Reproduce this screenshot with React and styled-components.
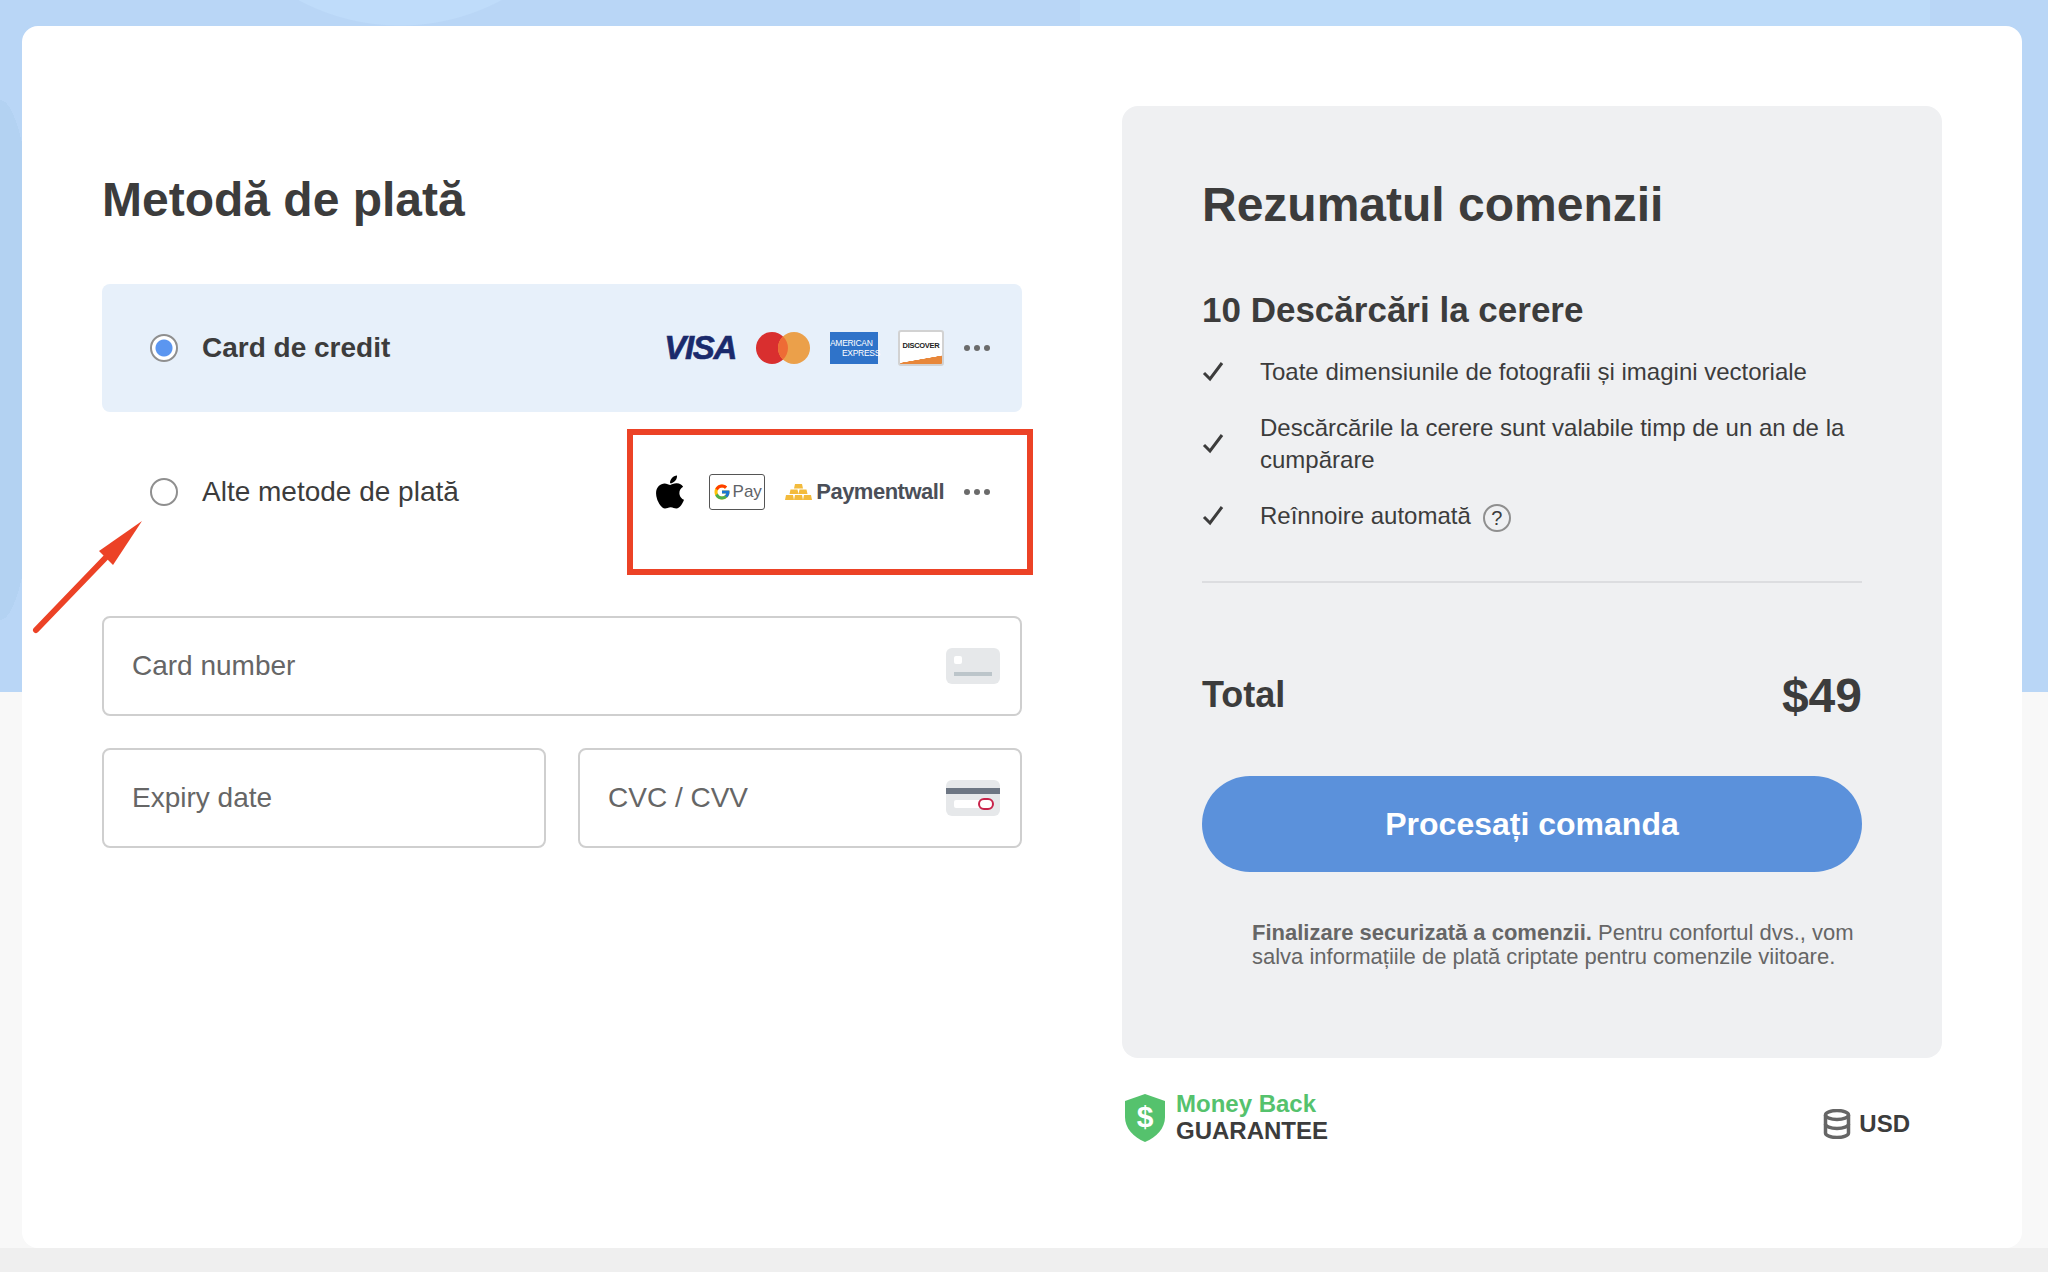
import React from 'react';
import styled, { createGlobalStyle } from 'styled-components';
import { FaApple } from 'react-icons/fa';
import { FcGoogle } from 'react-icons/fc';

const GlobalStyle = createGlobalStyle`
  html, body {
    margin: 0;
    padding: 0;
  }
  body {
    font-family: "Liberation Sans", Arial, sans-serif;
    color: #3c3c3c;
  }
  * {
    box-sizing: border-box;
  }
`;

const Page = styled.div`
  width: 2048px;
  height: 1272px;
  overflow: hidden;
  padding: 26px 26px 0 22px;
  background:
    radial-gradient(circle at 400px -190px, #bfdcfa 0 215px, transparent 216px),
    radial-gradient(ellipse 40px 260px at 0 360px, #b3d2f2 0 100%, transparent 100%),
    linear-gradient(90deg, transparent 0 1080px, #bddbf9 1080px 1930px, transparent 1930px) 0 0 / 100% 26px no-repeat,
    linear-gradient(180deg, #b9d6f6 0 692px, #f8f8f8 692px 1248px, #efefef 1248px);
`;

const Card = styled.main`
  position: relative;
  width: 2000px;
  height: 1222px;
  padding: 80px;
  display: flex;
  gap: 100px;
  background: #fff;
  border-radius: 16px;
`;

const PaymentColumn = styled.section`
  width: 920px;
  flex: none;
`;

const Title = styled.h1`
  margin: ${(p) => p.$margin};
  font-size: 48px;
  line-height: 56px;
  font-weight: 700;
  color: #3c3c3c;
`;

const MethodRow = styled.div`
  height: 128px;
  margin-top: ${(p) => p.$top}px;
  padding: 0 32px 0 48px;
  display: flex;
  align-items: center;
  border-radius: 8px;
  background: ${(p) => (p.$active ? '#e7f0fa' : 'transparent')};
`;

const Radio = styled.span`
  width: 28px;
  height: 28px;
  flex: none;
  margin-right: 24px;
  border-radius: 50%;
  border: 2px solid #8f8f8f;
  background: ${(p) => (p.$checked ? 'radial-gradient(circle, #5b96f0 0 8px, #fff 9px)' : '#fff')};
`;

const MethodLabel = styled.span`
  font-size: 28px;
  font-weight: ${(p) => (p.$bold ? 700 : 400)};
  color: #3c3c3c;
`;

const Logos = styled.div`
  margin-left: auto;
  display: flex;
  align-items: center;
  gap: 20px;
`;

const Visa = styled.span`
  font-size: 33px;
  line-height: 36px;
  font-weight: 700;
  font-style: italic;
  letter-spacing: -1.3px;
  -webkit-text-stroke: 0.6px #1a2a6c;
  color: #1a2a6c;
`;

const Amex = styled.span`
  width: 48px;
  height: 32px;
  display: flex;
  flex-direction: column;
  justify-content: center;
  background: #2f73c9;
  color: #fff;
  font-size: 8.5px;
  line-height: 10px;
  white-space: nowrap;
  letter-spacing: -0.3px;
  span:last-child {
    padding-left: 12px;
  }
`;

const Discover = styled.span`
  width: 46px;
  height: 36px;
  display: flex;
  align-items: center;
  justify-content: center;
  border: 2px solid #d2d2d2;
  border-radius: 3px;
  background: linear-gradient(170deg, #fff 0 78%, #e8873a 79%);
  padding-bottom: 5px;
  font-size: 7.5px;
  font-weight: 700;
  letter-spacing: -0.3px;
  color: #222;
`;

const Dots = styled.span`
  display: flex;
  gap: 4px;
  i {
    width: 6px;
    height: 6px;
    border-radius: 50%;
    background: #6b6b6b;
  }
`;

const GPay = styled.span`
  width: 56px;
  height: 36px;
  display: flex;
  align-items: center;
  justify-content: center;
  gap: 2px;
  border: 1px solid #555;
  border-radius: 3px;
  background: #fff;
  font-size: 17px;
  color: #5f6368;
`;

const PaymentWall = styled.span`
  display: flex;
  align-items: center;
  gap: 4px;
  font-size: 22px;
  font-weight: 700;
  letter-spacing: -0.5px;
  color: #4b4f58;
`;

const RedBox = styled.div`
  position: absolute;
  left: 605px;
  top: 403px;
  width: 406px;
  height: 146px;
  border: 6px solid #ec4226;
  pointer-events: none;
`;

const ArrowMark = styled.svg`
  position: absolute;
  left: 8px;
  top: 489px;
`;

const FieldRow = styled.div`
  display: flex;
  gap: 32px;
  margin-top: ${(p) => p.$top}px;
`;

const Field = styled.div`
  height: 100px;
  flex: 1;
  padding: 0 20px 0 28px;
  display: flex;
  align-items: center;
  justify-content: space-between;
  border: 2px solid #cfcfcf;
  border-radius: 8px;
  font-size: 28px;
  color: #666;
`;

const SummaryColumn = styled.aside`
  width: 820px;
  flex: none;
`;

const SummaryPanel = styled.div`
  height: 952px;
  padding: 0 80px;
  background: #eff0f2;
  border-radius: 16px;
  overflow: hidden;
`;

const PlanName = styled.h2`
  margin: 55px 0 0;
  font-size: 35px;
  line-height: 44px;
  font-weight: 700;
  color: #3c3c3c;
`;

const Features = styled.ul`
  list-style: none;
  margin: 23px 0 0;
  padding: 0 0 49px;
  border-bottom: 2px solid #dcdde0;
`;

const Feature = styled.li`
  display: flex;
  align-items: center;
  min-height: 32px;
  margin-top: 24px;
  gap: 34px;
  font-size: 24px;
  line-height: 32px;
  color: #3c3c3c;
`;

const CheckIcon = styled.svg`
  width: 24px;
  height: 24px;
  flex: none;
`;

const Help = styled.span`
  width: 28px;
  height: 28px;
  margin-left: 12px;
  display: inline-flex;
  align-items: center;
  justify-content: center;
  vertical-align: middle;
  border: 2px solid #8f8f8f;
  border-radius: 50%;
  font-size: 20px;
  line-height: 1;
`;

const TotalRow = styled.div`
  margin-top: 84px;
  height: 56px;
  display: flex;
  align-items: center;
  justify-content: space-between;
  font-weight: 700;
  color: #3c3c3c;
`;

const TotalLabel = styled.span`
  font-size: 36px;
`;

const TotalPrice = styled.span`
  font-size: 48px;
`;

const PayButton = styled.button`
  display: block;
  width: 660px;
  height: 96px;
  margin-top: 53px;
  border: 0;
  border-radius: 48px;
  background: #5b91db;
  color: #fff;
  font-family: inherit;
  font-size: 32px;
  font-weight: 700;
`;

const SecureNote = styled.p`
  margin: 49px 0 0;
  padding: 0 0 0 50px;
  font-size: 22px;
  line-height: 24px;
  color: #666;
  b {
    font-weight: 700;
  }
`;

const BelowPanel = styled.div`
  margin-top: 34px;
  padding: 0 32px 0 2px;
  display: flex;
  align-items: center;
  justify-content: space-between;
`;

const Guarantee = styled.div`
  display: flex;
  align-items: center;
  gap: 10px;
`;

const GuaranteeText = styled.div`
  margin-top: -2px;
  font-size: 24px;
  line-height: 27px;
  font-weight: 700;
  color: #3c3c3c;
  span {
    display: block;
    color: #55c26d;
  }
`;

const Currency = styled.div`
  display: flex;
  align-items: center;
  gap: 8px;
  margin-top: 12px;
  font-size: 24px;
  font-weight: 700;
  color: #3c3c3c;
`;

const MoreDots = () => (
  <Dots>
    <i />
    <i />
    <i />
  </Dots>
);

const Mastercard = () => (
  <svg width="54" height="32" viewBox="0 0 54 32">
    <circle cx="16" cy="16" r="16" fill="#d92f2f" />
    <circle cx="38" cy="16" r="16" fill="#eba04a" />
    <path d="M27 4.4a16 16 0 0 1 0 23.2 16 16 0 0 1 0-23.2z" fill="#ee6b35" />
  </svg>
);

const GoldBars = () => (
  <svg width="27" height="16" viewBox="0 0 27 16">
    <path
      fill="#f3bb3c"
      d="M10 0h7l1 4.5H9zM5.500 5.500h7l1 4.500h-9zM14.500 5.500h7l1 4.500h-9zM1 11h7l1 5H0zM10 11h7l1 5H9zM19 11h7l1 5h-9z"
    />
  </svg>
);

const CardFront = () => (
  <svg width="54" height="36" viewBox="0 0 54 36">
    <rect width="54" height="36" rx="6" fill="#e6e8ea" />
    <rect x="8" y="8" width="8" height="8" rx="2" fill="#fff" />
    <rect x="8" y="24" width="38" height="4" fill="#bcc5ca" />
  </svg>
);

const CardBack = () => (
  <svg width="54" height="36" viewBox="0 0 54 36">
    <rect width="54" height="36" rx="6" fill="#e6e8ea" />
    <rect y="8" width="54" height="6" fill="#6d7683" />
    <rect x="8" y="20" width="36" height="8" rx="2" fill="#fff" />
    <rect x="33" y="19" width="14" height="10" rx="5" fill="#fff" stroke="#c8234a" strokeWidth="2" />
  </svg>
);

const Check = () => (
  <CheckIcon viewBox="0 0 24 24">
    <path d="M2 13l6 6L20 3" fill="none" stroke="#3c3c3c" strokeWidth="3" />
  </CheckIcon>
);

const Shield = () => (
  <svg width="42" height="48" viewBox="0 0 42 48">
    <path d="M21 0l20 7v16c0 11-8 20-20 25C9 43 1 34 1 23V7z" fill="#55c26d" />
    <text x="21" y="33" textAnchor="middle" fontFamily="Liberation Sans" fontWeight="700" fontSize="30" fill="#fff">
      $
    </text>
  </svg>
);

const Coins = () => (
  <svg width="28" height="30" viewBox="0 0 28 30" fill="none" stroke="#666" strokeWidth="3.500">
    <ellipse cx="14" cy="6" rx="11.500" ry="4.500" />
    <path d="M2.500 6v18c0 2.500 5 4.500 11.500 4.500S25.500 26.500 25.500 24V6" />
    <path d="M2.500 15c0 2.500 5 4.500 11.500 4.500S25.500 17.500 25.500 15" />
  </svg>
);

export default function App() {
  return (
    <>
      <GlobalStyle />
      <Page>
        <Card>
          <PaymentColumn>
            <Title $margin="66px 0 0">Metodă de plată</Title>
            <MethodRow $active $top={56}>
              <Radio $checked />
              <MethodLabel $bold>Card de credit</MethodLabel>
              <Logos>
                <Visa>VISA</Visa>
                <Mastercard />
                <Amex>
                  <span>AMERICAN</span>
                  <span>EXPRESS</span>
                </Amex>
                <Discover>DISCOVER</Discover>
                <MoreDots />
              </Logos>
            </MethodRow>
            <MethodRow $top={16}>
              <Radio />
              <MethodLabel>Alte metode de plată</MethodLabel>
              <Logos>
                <FaApple size={38} color="#000" />
                <GPay>
                  <FcGoogle size={18} />
                  Pay
                </GPay>
                <PaymentWall>
                  <GoldBars />
                  Paymentwall
                </PaymentWall>
                <MoreDots />
              </Logos>
            </MethodRow>
            <FieldRow $top={60}>
              <Field>
                Card number
                <CardFront />
              </Field>
            </FieldRow>
            <FieldRow $top={32}>
              <Field>Expiry date</Field>
              <Field>
                CVC / CVV
                <CardBack />
              </Field>
            </FieldRow>
          </PaymentColumn>

          <SummaryColumn>
            <SummaryPanel>
              <Title $margin="71px 0 0">Rezumatul comenzii</Title>
              <PlanName>10 Descărcări la cerere</PlanName>
              <Features>
                <Feature>
                  <Check />
                  <span>Toate dimensiunile de fotografii și imagini vectoriale</span>
                </Feature>
                <Feature>
                  <Check />
                  <span>Descărcările la cerere sunt valabile timp de un an de la cumpărare</span>
                </Feature>
                <Feature>
                  <Check />
                  <span>
                    Reînnoire automată
                    <Help>?</Help>
                  </span>
                </Feature>
              </Features>
              <TotalRow>
                <TotalLabel>Total</TotalLabel>
                <TotalPrice>$49</TotalPrice>
              </TotalRow>
              <PayButton>Procesați comanda</PayButton>
              <SecureNote>
                <b>Finalizare securizată a comenzii.</b> Pentru confortul dvs., vom salva informațiile de
                plată criptate pentru comenzile viitoare.
              </SecureNote>
            </SummaryPanel>
            <BelowPanel>
              <Guarantee>
                <Shield />
                <GuaranteeText>
                  <span>Money Back</span>
                  GUARANTEE
                </GuaranteeText>
              </Guarantee>
              <Currency>
                <Coins />
                USD
              </Currency>
            </BelowPanel>
          </SummaryColumn>

          <RedBox />
          <ArrowMark width="120" height="125" viewBox="0 0 120 125">
            <path d="M6 115L84 34" stroke="#ec4226" strokeWidth="6" strokeLinecap="round" />
            <path d="M112 6L69 36 83 50z" fill="#ec4226" />
          </ArrowMark>
        </Card>
      </Page>
    </>
  );
}
